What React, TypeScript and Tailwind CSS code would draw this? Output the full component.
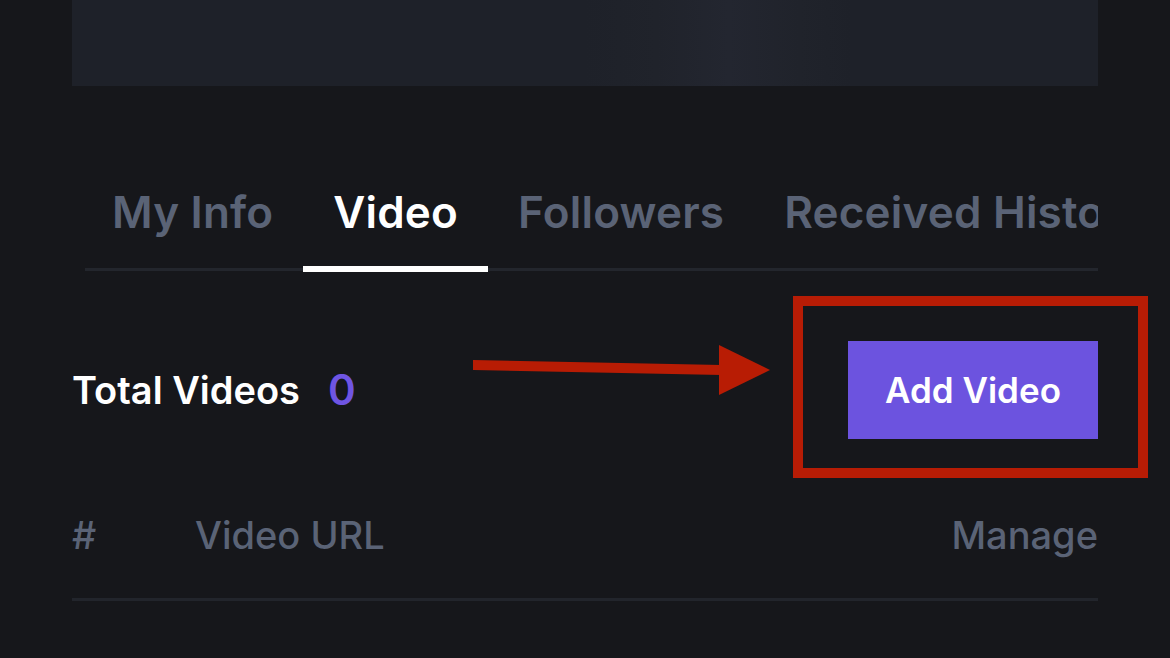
const tabs = ["My Info", "Video", "Followers", "Received History"];

export default function App() {
  return (
    <div
      className="h-[658px] w-[1170px] overflow-hidden bg-[#16171b] px-[72px]"
      style={{ fontFamily: "Inter, 'Noto Sans', sans-serif" }}
    >
      {/* Cover card */}
      <div className="h-[86px] w-full bg-[linear-gradient(90deg,#1e2129_0%,#1e2129_50%,#20232b_57%,#232630_64%,#20232b_71%,#1e2129_76%,#1e2129_100%)]" />

      {/* Tabs */}
      <div className="relative ml-[10px] mt-[100px] overflow-hidden">
        <div className="absolute bottom-[1px] left-[3px] right-0 h-[3px] bg-[#23262d]" />
        <div className="relative flex whitespace-nowrap">
          {tabs.map((tab) => {
            const active = tab === "Video";
            return (
              <div key={tab} className="flex shrink-0 flex-col">
                <span
                  className={
                    active
                      ? "h-[52px] px-[30px] text-[44px] font-semibold leading-[52px] tracking-[0.2px] text-white"
                      : "h-[52px] px-[30px] text-[44px] font-semibold leading-[52px] tracking-[0.2px] text-[#5a6376]"
                  }
                >
                  {tab}
                </span>
                <div
                  className={
                    active
                      ? "mt-[28px] h-[6px] w-full bg-white"
                      : "mt-[28px] h-[6px] w-full bg-transparent"
                  }
                />
              </div>
            );
          })}
        </div>
      </div>

      {/* Total row */}
      <div className="relative mt-[69px] flex items-center justify-between">
        <div className="flex items-center gap-[28px]">
          <span className="text-[38px] font-semibold leading-none text-white">
            Total Videos
          </span>
          <span className="text-[42px] font-semibold leading-none text-[#6f55e3]">
            0
          </span>
        </div>

        {/* annotation arrow */}
        <svg
          className="absolute left-[398px] top-[-1px]"
          width="305"
          height="60"
          viewBox="0 0 305 60"
        >
          <polygon points="3,20 252,25 252,35 3,30" fill="#b81c04" />
          <polygon points="249,5 300,30 249,55" fill="#b81c04" />
        </svg>

        <div className="relative">
          <button className="flex h-[98px] w-[250px] items-center justify-center bg-[#6c53df] text-[35px] font-semibold text-white">
            Add Video
          </button>
          <div className="pointer-events-none absolute -bottom-[39px] -left-[55px] -right-[50px] -top-[45px] border-[10px] border-[#b71c05]" />
        </div>
      </div>

      {/* Table header */}
      <div className="mt-[74px] flex items-center border-b-[3px] border-[#22252c] pb-[41px] text-[38px] font-medium leading-[44px] text-[#5a6376]">
        <span className="w-[123px]">#</span>
        <span className="flex-1">Video URL</span>
        <span>Manage</span>
      </div>
    </div>
  );
}
